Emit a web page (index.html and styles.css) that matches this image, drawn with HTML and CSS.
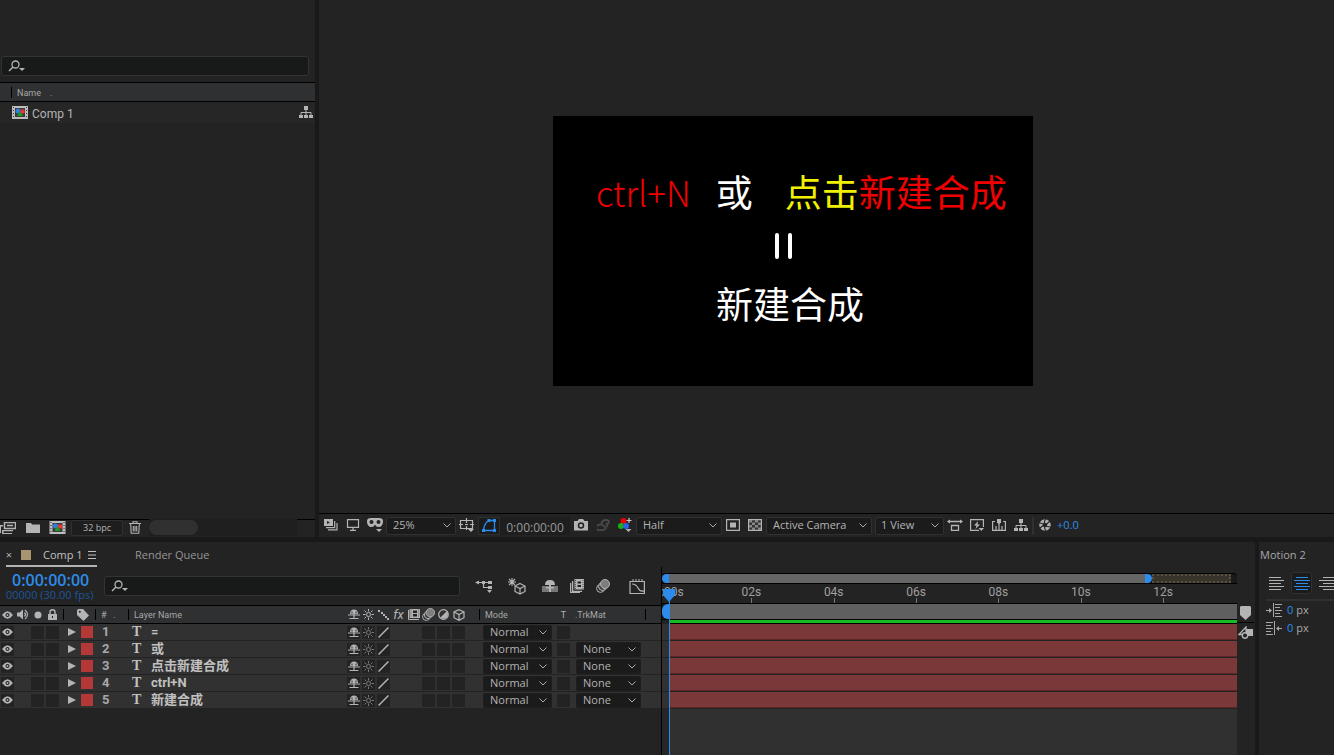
FILE: index.html
```html
<!DOCTYPE html>
<html lang="en">
<head>
	<meta charset="utf-8">
	<title>Comp 1</title>
	<link rel="stylesheet" href="styles.css">
</head>
<body>
	<svg class="sprite">
		<symbol id="i-search" viewBox="0 0 18 12"><circle cx="7.500" cy="4.500" r="3.500" fill="none" stroke="currentColor" stroke-width="1.300"/><path d="M5 7L1 11" stroke="currentColor" stroke-width="1.500"/><path d="M11 8h6l-3 3z" fill="currentColor"/></symbol>
		<symbol id="i-comp" viewBox="0 0 16 13"><path d="M0 0h16v13H0z" fill="#bdbdbd"/><path d="M3 2h10v9H3z" fill="#3a3a3a"/><path d="M1 1.500h1M1 4.500h1M1 7.500h1M1 10.500h1M14 1.500h1M14 4.500h1M14 7.500h1M14 10.500h1" stroke="#333"/><circle cx="6" cy="5" r="2.500" fill="#2d7fe0"/><path d="M8.500 3.500h4v4h-4z" fill="#e33"/><path d="M5 10l3-5 3 5z" fill="#1c9c22"/></symbol>
		<symbol id="i-tree" viewBox="0 0 14 13"><path d="M5 0h4v4H5zM0 9h4v3H0zM5 9h4v3H5zM10 9h4v3h-4z" fill="currentColor"/><path d="M7 4v5M2 9V6.500h10V9" fill="none" stroke="currentColor"/></symbol>
		<symbol id="i-footage" viewBox="0 0 16 12"><path d="M4.500.500h11v6h-11zM7 3.500h6" fill="none" stroke="currentColor" stroke-width="1.500"/><path d="M0 3h3v1.500H1V11H0zM2 8h11v1.300H3.500V11H12v1H2z" fill="currentColor"/></symbol>
		<symbol id="i-folder" viewBox="0 0 14 10"><path d="M0 0h5l1 1.500h8V10H0z" fill="currentColor"/></symbol>
		<symbol id="i-trash" viewBox="0 0 12 13"><path d="M0 2.500h12M4 2V.700h4V2M1.700 3l.5 9.300h7.600l.5-9.300M4.300 5v5.500M6 5v5.500M7.700 5v5.500" fill="none" stroke="currentColor" stroke-width="1.100"/></symbol>
		<symbol id="i-preview" viewBox="0 0 14 12"><path d="M0 0h9v7H0z" fill="currentColor"/><path d="M3 2l3 1.500L3 5z" fill="#222"/><path d="M2 8.700h8.700V2M4 10.900h9V4" fill="none" stroke="currentColor" stroke-width="1.200"/></symbol>
		<symbol id="i-monitor" viewBox="0 0 14 12"><path d="M1.500.600h11v7.800h-11zM7 8.500V11M4 11.300h6" fill="none" stroke="currentColor" stroke-width="1.200"/></symbol>
		<symbol id="i-mask" viewBox="0 0 16 14"><path d="M0 3Q0 0 4 0h8q4 0 4 3c0 4-2 6-4.500 6Q9 9 8 6.500 7 9 4.500 9C2 9 0 7 0 3z" fill="currentColor"/><circle cx="4.500" cy="4" r="2" fill="#222"/><circle cx="11.500" cy="4" r="2" fill="#222"/><path d="M9 11h6l-3 3z" fill="currentColor"/></symbol>
		<symbol id="i-region" viewBox="0 0 16 14"><path d="M1.500 2.500h12v8h-12zM7.500 0v5M7.500 8v4M0 6.500h4M11 6.500h4M6 6.500h3" fill="none" stroke="currentColor" stroke-width="1.200"/><path d="M9 11h6l-3 3z" fill="currentColor"/></symbol>
		<symbol id="i-shape" viewBox="0 0 14 13"><path d="M1.500 11.500C2 6 4 3 7 1.500h5.500v10z" fill="none" stroke="currentColor" stroke-width="1.300"/><path d="M5.500 0h3v3h-3zM11 0h3v3h-3zM0 10h3v3H0zM11 10h3v3h-3z" fill="currentColor"/></symbol>
		<symbol id="i-camera" viewBox="0 0 14 12"><path d="M0 2h3.500L5 0h4l1.500 2H14v9.500H0z" fill="currentColor"/><circle cx="7" cy="6.500" r="2.500" fill="none" stroke="#222" stroke-width="1.500"/></symbol>
		<symbol id="i-person" viewBox="0 0 14 12"><path d="M5 5.500Q6 1 10 1q3 0 3 2t-3 2q2 1 1 3M1 7q3-3 7 0t-1 4-6-1" fill="none" stroke="#484848" stroke-width="1.800"/></symbol>
		<symbol id="i-rgb" viewBox="0 0 14 14"><circle cx="5.500" cy="3" r="3" fill="#f00000"/><circle cx="3" cy="8" r="3" fill="#12b412"/><circle cx="8" cy="8" r="3" fill="#2c62e4"/><path d="M11 0v5M8.500 2.500h5" stroke="#ccc" stroke-width="1.200"/><path d="M7.500 11h6l-3 3z" fill="currentColor"/></symbol>
		<symbol id="i-toggle" viewBox="0 0 14 12"><path d="M.600.600h12.800v10.800H.600z" fill="none" stroke="currentColor" stroke-width="1.200"/><path d="M4 3.500h6v5H4z" fill="currentColor"/></symbol>
		<symbol id="i-checker" viewBox="0 0 14 12"><path d="M.600.600h12.800v10.800H.600z" fill="#333" stroke="currentColor" stroke-width="1.200"/><path d="M1 1h3v2.500H1zM7 1h3v2.500H7zM4 3.500h3V6H4zM10 3.500h3V6h-3zM1 6h3v2.500H1zM7 6h3v2.500H7zM4 8.500h3V11H4zM10 8.500h3V11h-3z" fill="#888"/></symbol>
		<symbol id="i-aspect" viewBox="0 0 16 12"><path d="M1 2.500h14M4.500 6.500h7v5h-7z" fill="none" stroke="currentColor" stroke-width="1.300"/><path d="M0 2.500L3 .500v4zM16 2.500L13 .500v4z" fill="currentColor"/></symbol>
		<symbol id="i-fast" viewBox="0 0 14 13"><path d="M9 11.400H.600V.600h12.800V8" fill="none" stroke="currentColor" stroke-width="1.200"/><path d="M8 2L4 6.500h2.500L5.500 10 10 5.500H7.500zM8.500 9H14l-2.700 3z" fill="currentColor"/></symbol>
		<symbol id="i-timeline" viewBox="0 0 14 12"><path d="M3 2.500H.600v8.800h12.800V2.500H11M4 11V7M7 11V5M10 11V7" fill="none" stroke="currentColor" stroke-width="1.200"/><path d="M5 0h4v3.500L7 5.500l-2-2z" fill="currentColor"/></symbol>
		<symbol id="i-aperture" viewBox="0 0 12 12"><circle cx="6" cy="6" r="4" fill="none" stroke="currentColor" stroke-width="3.500"/><path d="M5 4L6.500 0M7.800 5L11 2M7.500 7.500L12 8M5.500 8l1 4M4 6.500L0 10M4 5L0 3.500" stroke="#222" stroke-width="1.100"/></symbol>
		<symbol id="i-flow" viewBox="0 0 18 13"><path d="M2 2.500h14M8.500 2.500v5H15" fill="none" stroke="currentColor" stroke-width="1.200"/><path d="M0 2.500L4 .500v4zM7 1h3v3H7zM13 1h4v3h-4zM13 6h4v3h-4zM12 10h5l-2.500 3z" fill="currentColor"/></symbol>
		<symbol id="i-draft" viewBox="0 0 18 17"><path d="M4 0v8M0 4h8M1 1l6 6M7 1L1 7" stroke="currentColor" stroke-width="1.100"/><path d="M12 5.500l5 2.500v5.500L12 16l-5-2.500V8zM7 8l5 2.500L17 8M12 10.500V16" fill="none" stroke="currentColor" stroke-width="1.200"/></symbol>
		<symbol id="i-shyall" viewBox="0 0 16 14"><path d="M0 7h16v6H0z" fill="#777"/><path d="M3 6Q3 1 8 1t5 5zM7 5h2v8H7zM4 8h8v1.500H4z" fill="currentColor"/></symbol>
		<symbol id="i-frames" viewBox="0 0 14 14"><path d="M4.500 0H14v10.500H4.500z" fill="currentColor"/><path d="M2.600 2v10.300H12M.600 4v9.400H10" fill="none" stroke="currentColor" stroke-width="1.300"/><path d="M7.500 2.500h3.500V4.500H7.500zM7.500 6h3.500v2H7.500z" fill="#222"/><path d="M5.500 1v9M13 1v9" stroke="#555" stroke-dasharray="1 1"/></symbol>
		<symbol id="i-blur" viewBox="0 0 14 14"><circle cx="4.500" cy="9.500" r="3.900" fill="none" stroke="currentColor"/><circle cx="6.500" cy="7.500" r="4" fill="#444" stroke="currentColor"/><circle cx="9" cy="5" r="4.500" fill="#7d7d7d" stroke="currentColor"/></symbol>
		<symbol id="i-graph" viewBox="0 0 16 15"><path d="M1 2.500h14.400v12H1zM3 5q4 0 6 4t6 3" fill="none" stroke="currentColor" stroke-width="1.200"/><path d="M4 0v2M7 0v2M10 0v2M13 0v2" stroke="currentColor"/></symbol>
		<symbol id="i-eye" viewBox="0 0 12 8"><path d="M0 4q6-8 12 0-6 8-12 0z" fill="currentColor"/><circle cx="6" cy="4" r="2.200" fill="#222"/><circle cx="6" cy="4" r="1" fill="currentColor"/></symbol>
		<symbol id="i-speaker" viewBox="0 0 12 11"><path d="M0 3.500h2.500L6 .500v10L2.500 7.500H0z" fill="currentColor"/><path d="M7.500 3.500q2 2 0 4M8 1q5 4.500 0 9" fill="none" stroke="currentColor" stroke-width="1.200"/></symbol>
		<symbol id="i-dot" viewBox="0 0 8 8"><circle cx="4" cy="4" r="3.500" fill="currentColor"/></symbol>
		<symbol id="i-lock" viewBox="0 0 9 11"><path d="M0 5h9v6H0z" fill="currentColor"/><path d="M2 5.500V3q0-2.300 2.500-2.300T7 3v2.500" fill="none" stroke="currentColor" stroke-width="1.400"/><path d="M4 7h1v2H4z" fill="#222"/></symbol>
		<symbol id="i-tag" viewBox="0 0 12 12"><path d="M0 1.500L1 0h5l6 6.500L6.500 12 0 6z" fill="currentColor"/><circle cx="2.800" cy="2.800" r="1" fill="#222"/></symbol>
		<symbol id="i-shy" viewBox="0 0 12 11"><path d="M2 5Q2 .500 6 .500T10 5z" fill="currentColor"/><path d="M6 3v7M0 6h12M1.500 9.500h9" stroke="currentColor" stroke-width="1.200"/><path d="M4 2.500v2M8 2.500v2" stroke="#333"/></symbol>
		<symbol id="i-sun" viewBox="0 0 11 11"><circle cx="5.500" cy="5.500" r="2" fill="none" stroke="currentColor"/><path d="M5.500 0v2.500M5.500 8.500V11M0 5.500h2.500M8.500 5.500H11M1.500 1.500l1.800 1.800M7.700 7.700l1.800 1.800M9.500 1.500L7.700 3.300M3.300 7.700L1.500 9.500" stroke="currentColor"/></symbol>
		<symbol id="i-dots" viewBox="0 0 11 11"><path d="M0 1h2v2H0zM3 3h2v2H3zM5 5h2v2H5zM7 7h2v2H7zM9 9h2v2H9z" fill="currentColor"/></symbol>
		<symbol id="i-slash" viewBox="0 0 11 11"><path d="M.500 10.500l10-10" stroke="currentColor" stroke-width="1.500"/></symbol>
		<symbol id="i-film" viewBox="0 0 12 11"><path d="M1.500 0H12v9H1.500z" fill="currentColor"/><path d="M.500 1v9.500H11" fill="none" stroke="currentColor"/><path d="M5 1.500h4V4H5zM5 5h4v2.500H5z" fill="#222"/><path d="M3 .500v8M10.700.500v8" stroke="#555" stroke-dasharray="1 1"/></symbol>
		<symbol id="i-adjust" viewBox="0 0 11 11"><circle cx="5.500" cy="5.500" r="4.800" fill="#333" stroke="currentColor" stroke-width="1.200"/><path d="M2 9L9 2Q11 5 9 8T2 9z" fill="currentColor"/></symbol>
		<symbol id="i-cube" viewBox="0 0 12 12"><path d="M6 .700l5 2.300v5.700L6 11.300 1 8.700V3zM1 3l5 2.500L11 3M6 5.500v6" fill="none" stroke="currentColor" stroke-width="1.200"/></symbol>
		<symbol id="i-twirl" viewBox="0 0 8 8"><path d="M0 0l8 4-8 4z" fill="currentColor"/></symbol>
		<symbol id="i-menu" viewBox="0 0 8 8"><path d="M0 .500h8M0 4h8M0 7.500h8" stroke="currentColor"/></symbol>
		<symbol id="i-marker" viewBox="0 0 11 14"><path d="M1 0h9l1 1v8l-5.500 5L0 9V1z" fill="currentColor"/></symbol>
		<symbol id="i-bin" viewBox="0 0 15 14"><path d="M1 8.500L8 1v7.500z" fill="none" stroke="currentColor" stroke-width="1.300"/><path d="M8 3h7v7H8z" fill="currentColor"/><circle cx="7" cy="9.500" r="2.700" fill="#232323" stroke="currentColor" stroke-width="1.400"/></symbol>
		<symbol id="i-left" viewBox="0 0 16 14"><path d="M0 1.500h12M0 4.500h15M0 7.500h12M0 10.500h15M0 13.500h12" stroke="currentColor"/></symbol>
		<symbol id="i-center" viewBox="0 0 16 14"><path d="M2 1.500h12M0 4.500h16M2 7.500h12M0 10.500h16M2 13.500h12" stroke="currentColor"/></symbol>
		<symbol id="i-right" viewBox="0 0 16 14"><path d="M4 1.500h12M0 4.500h16M4 7.500h12M0 10.500h16M4 13.500h12" stroke="currentColor"/></symbol>
		<symbol id="i-inleft" viewBox="0 0 16 14"><path d="M0 7.500h5M7.500 0v14M9 1.500h7M9 4.500h5M9 7.500h7M9 10.500h5M9 13.500h7" stroke="currentColor"/><path d="M3 5L6 7.500 3 10z" fill="currentColor"/></symbol>
		<symbol id="i-inright" viewBox="0 0 16 14"><path d="M11 7.500h5M8.500 0v14M0 1.500h7M0 4.500h5M0 7.500h7M0 10.500h5M0 13.500h7" stroke="currentColor"/><path d="M13 5L10 7.500l3 2.500z" fill="currentColor"/></symbol>
	</svg>

	<div class="workspace">
		<div class="upper">
			<section class="project">
				<label class="search project-search">
					<svg width="18" height="12"><use href="#i-search"/></svg>
					<input type="text" aria-label="Search project">
				</label>
				<div class="project-head">Name<span>.</span></div>
				<div class="project-item">
					<svg width="16" height="13"><use href="#i-comp"/></svg>
					<span>Comp 1</span>
					<svg class="item-tree" width="14" height="13"><use href="#i-tree"/></svg>
				</div>
				<div class="project-foot">
					<button aria-label="Interpret footage"><svg width="16" height="12"><use href="#i-footage"/></svg></button>
					<button aria-label="New folder"><svg width="14" height="10"><use href="#i-folder"/></svg></button>
					<button aria-label="New composition"><svg width="17" height="13"><use href="#i-comp"/></svg></button>
					<button class="depth">32 bpc</button>
					<button aria-label="Delete"><svg width="12" height="13"><use href="#i-trash"/></svg></button>
					<div class="scroll"><div class="thumb"></div></div>
				</div>
			</section>

			<section class="viewer">
				<div class="stage">
					<div class="comp">
						<div class="shot first"><span class="red latin">ctrl+N</span><span class="or">或</span><span class="yellow">点击</span><span class="red">新建合成</span></div>
						<div class="equals"><i></i><i></i></div>
						<div class="shot second">新建合成</div>
					</div>
				</div>
				<div class="viewer-bar">
					<button aria-label="Always preview"><svg width="14" height="12"><use href="#i-preview"/></svg></button>
					<button aria-label="Primary viewer"><svg width="14" height="12"><use href="#i-monitor"/></svg></button>
					<button aria-label="VR"><svg width="16" height="14"><use href="#i-mask"/></svg></button>
					<select class="zoom" aria-label="Magnification"><option>25%</option></select>
					<button aria-label="Grid and guides"><svg width="16" height="14"><use href="#i-region"/></svg></button>
					<button class="on" aria-label="Mask visibility"><svg width="14" height="13"><use href="#i-shape"/></svg></button>
					<button class="time">0:00:00:00</button>
					<button aria-label="Snapshot"><svg width="14" height="12"><use href="#i-camera"/></svg></button>
					<button aria-label="Show snapshot"><svg width="14" height="12"><use href="#i-person"/></svg></button>
					<button aria-label="Channels"><svg width="14" height="14"><use href="#i-rgb"/></svg></button>
					<select class="res" aria-label="Resolution"><option>Half</option></select>
					<button aria-label="Region of interest"><svg width="14" height="12"><use href="#i-toggle"/></svg></button>
					<button aria-label="Transparency grid"><svg width="14" height="12"><use href="#i-checker"/></svg></button>
					<select class="cam" aria-label="3D view"><option>Active Camera</option></select>
					<select class="views" aria-label="View layout"><option>1 View</option></select>
					<button aria-label="Pixel aspect"><svg width="16" height="12"><use href="#i-aspect"/></svg></button>
					<button aria-label="Fast previews"><svg width="14" height="13"><use href="#i-fast"/></svg></button>
					<button aria-label="Timeline"><svg width="14" height="12"><use href="#i-timeline"/></svg></button>
					<button aria-label="Flowchart"><svg width="14" height="13"><use href="#i-tree"/></svg></button>
					<span class="bar-line"></span>
					<button aria-label="Reset exposure"><svg width="12" height="12"><use href="#i-aperture"/></svg></button>
					<span class="exposure">+0.0</span>
				</div>
			</section>
		</div>

		<div class="lower">
			<section class="timeline">
				<div class="tabs">
					<div class="tab active">
						<button class="close" aria-label="Close">×</button>
						<span class="swatch"></span>
						<span>Comp 1</span>
						<svg width="8" height="8"><use href="#i-menu"/></svg>
					</div>
					<div class="tab">Render Queue</div>
				</div>
				<div class="timeline-body">
					<div class="layers">
						<div class="tools">
							<div class="clock"><b>0:00:00:00</b><span>00000 (30.00 fps)</span></div>
							<label class="search layer-search">
								<svg width="18" height="12"><use href="#i-search"/></svg>
								<input type="text" aria-label="Search layers">
							</label>
							<button class="wide" aria-label="Mini-flowchart"><svg width="18" height="13"><use href="#i-flow"/></svg></button>
							<button class="wide" aria-label="Draft 3D"><svg width="18" height="17"><use href="#i-draft"/></svg></button>
							<button class="wide" aria-label="Hide shy layers"><svg width="16" height="14"><use href="#i-shyall"/></svg></button>
							<button aria-label="Frame blending"><svg width="14" height="14"><use href="#i-frames"/></svg></button>
							<button class="blur" aria-label="Motion blur"><svg width="14" height="14"><use href="#i-blur"/></svg></button>
							<button class="graph" aria-label="Graph editor"><svg width="16" height="15"><use href="#i-graph"/></svg></button>
						</div>
						<table>
							<colgroup>
								<col span="4" class="c-sw"><col class="c-label"><col class="c-num"><col class="c-name">
								<col span="8" class="c-sw"><col class="c-mode"><col class="c-sw"><col class="c-matte">
							</colgroup>
							<thead>
								<tr>
									<th><svg width="11" height="8"><use href="#i-eye"/></svg></th>
									<th><svg width="12" height="11"><use href="#i-speaker"/></svg></th>
									<th><svg width="8" height="8"><use href="#i-dot"/></svg></th>
									<th><svg width="9" height="11"><use href="#i-lock"/></svg></th>
									<th class="line tag"><svg width="12" height="12"><use href="#i-tag"/></svg></th>
									<th class="line txt">#&nbsp; &nbsp;.</th>
									<th class="line txt">Layer Name</th>
									<th><svg width="12" height="11"><use href="#i-shy"/></svg></th>
									<th><svg width="11" height="11"><use href="#i-sun"/></svg></th>
									<th><svg width="11" height="11"><use href="#i-dots"/></svg></th>
									<th class="fx">fx</th>
									<th><svg width="12" height="11"><use href="#i-film"/></svg></th>
									<th><svg width="13" height="13"><use href="#i-blur"/></svg></th>
									<th><svg width="11" height="11"><use href="#i-adjust"/></svg></th>
									<th><svg width="12" height="12"><use href="#i-cube"/></svg></th>
									<th class="line txt mode-head">Mode</th>
									<th>T</th>
									<th class="line txt matte-head">.TrkMat</th>
								</tr>
							</thead>
							<tbody id="rows"></tbody>
						</table>
					</div>
					<div class="tracks">
						<div class="navigator"><i class="grip start"></i><i class="span"></i><i class="grip end"></i><i class="rest"></i></div>
						<div class="ruler">
							<div><span>0:00s</span></div><div><span>02s</span></div><div><span>04s</span></div><div><span>06s</span></div><div><span>08s</span></div><div><span>10s</span></div><div><span>12s</span></div>
						</div>
						<div class="work"><i class="grip start"></i><i class="span"></i></div>
						<div class="cached"></div>
						<div id="bars"></div>
						<div class="playhead"><svg width="12" height="13"><path d="M0 0h12v6l-6 7-6-7z" fill="#2d8ceb"/></svg></div>
					</div>
					<div class="side">
						<button aria-label="Comp marker"><svg width="11" height="14"><use href="#i-marker"/></svg></button>
						<button aria-label="Comp button"><svg width="15" height="14"><use href="#i-bin"/></svg></button>
					</div>
				</div>
			</section>

			<section class="motion">
				<h2>Motion 2</h2>
				<div class="align">
					<button aria-label="Left"><svg width="16" height="14"><use href="#i-left"/></svg></button>
					<button class="on" aria-label="Center"><svg width="16" height="14"><use href="#i-center"/></svg></button>
					<button aria-label="Right"><svg width="16" height="14"><use href="#i-right"/></svg></button>
				</div>
				<div class="indent"><svg width="16" height="14"><use href="#i-inleft"/></svg><span><b>0</b> px</span></div>
				<div class="indent"><svg width="16" height="14"><use href="#i-inright"/></svg><span><b>0</b> px</span></div>
			</section>
		</div>
	</div>
	<script src="script.js"></script>
</body>
</html>
```

FILE: styles.css
```css
* {
	box-sizing: border-box;
}
body {
	margin: 0;
	background-color: #191919;
	color: #a8a8a8;
	font-family: "Open Sans", "Noto Sans CJK SC", sans-serif;
	font-size: 11px;
	line-height: 14px;
}
.sprite {
	display: none;
}
svg {
	display: block;
	flex: none;
}
button, input, select {
	font: inherit;
	color: inherit;
	background: none;
	border: 0;
	border-radius: 0;
	padding: 0;
	margin: 0;
	outline: none;
}
button {
	display: flex;
	align-items: center;
	justify-content: center;
	flex: none;
	width: 22px;
	height: 18px;
	color: #b4b4b4;
}
select {
	appearance: none;
	height: 18px;
	padding: 0 0 2px 6px;
	border: 1px solid #303030;
	border-radius: 2px;
	color: #b4b4b4;
	background: #1b1b1b url("data:image/svg+xml,%3Csvg xmlns='http://www.w3.org/2000/svg' width='8' height='5'%3E%3Cpath d='M.5.5L4 4 7.500.5' fill='none' stroke='%23a8a8a8'/%3E%3C/svg%3E") no-repeat right 4px center;
}
.workspace {
	display: grid;
	grid-template-rows: minmax(0, 1fr) 213px;
	gap: 5px;
	height: 100vh;
	overflow: hidden;
}
.upper {
	display: grid;
	grid-template-columns: 315px minmax(0, 1fr);
	gap: 4px;
}
.lower {
	display: grid;
	grid-template-columns: minmax(0, 1fr) 75px;
	gap: 4px;
}
.project, .viewer, .timeline, .motion {
	display: flex;
	flex-direction: column;
	min-width: 0;
	overflow: hidden;
	background-color: #232323;
}

/* project panel */
.search {
	display: flex;
	align-items: center;
	height: 20px;
	padding-left: 6px;
	border: 1px solid #333;
	border-radius: 3px;
	background-color: #181a19;
	color: #b4b4b4;
}
.search input {
	flex: 1;
	min-width: 0;
}
.project-search {
	margin: 56px 6px 6px 1px;
}
.project-head {
	height: 20px;
	border-top: 1px solid #000;
	border-bottom: 1px solid #000;
	padding-left: 17px;
	background: linear-gradient(#000, #000) 11px 4px / 1px 11px no-repeat #2f3031;
	font-family: Roboto, sans-serif;
	font-size: 9px;
	line-height: 20px;
}
.project-head span {
	margin-left: 9px;
}
.project-item {
	display: flex;
	align-items: center;
	gap: 4px;
	height: 21px;
	padding: 0 2px 0 12px;
	background-color: #262626;
	color: #b4b4b4;
	font-family: Roboto, sans-serif;
	font-size: 12px;
}
.project-item span {
	padding-top: 2px;
}
.item-tree {
	margin-left: auto;
}
.project-foot {
	display: flex;
	align-items: center;
	margin-top: auto;
	height: 18px;
	padding-bottom: 2px;
	border-top: 1px solid #000;
}
.project-foot button {
	width: 25px;
	height: 16px;
}
.project-foot button:first-child {
	width: 20px;
	padding-right: 4px;
}
.project-foot .depth {
	width: 52px;
	margin: 0 1px;
	border: 1px solid #303030;
	border-radius: 2px;
	background-color: #1e1e1e;
	font-size: 9px;
}
.project-foot .depth + button {
	width: 22px;
	margin-right: 3px;
}
.scroll {
	width: 148px;
	height: 17px;
	background-color: #1f1f1f;
}
.thumb {
	width: 49px;
	height: 15px;
	margin-top: 1px;
	border-radius: 8px;
	background-color: #303030;
}

/* composition viewer */
.stage {
	flex: 1;
	display: flex;
	align-items: center;
	justify-content: center;
	padding: 0 67px 11px 0;
}
.comp {
	position: relative;
	width: 480px;
	height: 270px;
	background-color: #000;
	color: #fff;
	font-family: "Noto Sans CJK SC", sans-serif;
	font-weight: 400;
	font-size: 37px;
	line-height: 44px;
}
.shot {
	position: absolute;
	white-space: nowrap;
}
.first {
	left: 43px;
	top: 53px;
}
.second {
	left: 163px;
	top: 165px;
}
.latin {
	font-size: 35px;
	font-weight: 300;
}
.or {
	margin: 0 32px 0 25px;
}
.red {
	color: #f00000;
}
.yellow {
	color: #f0f000;
}
.equals {
	position: absolute;
	left: 222px;
	top: 117px;
	display: flex;
	gap: 9px;
}
.equals i {
	width: 4px;
	height: 26px;
	border-radius: 2px;
	background-color: #fff;
}
.viewer-bar {
	display: flex;
	align-items: center;
	height: 24px;
	padding-left: 1px;
	border-top: 1px solid #000;
}
.viewer-bar button {
	padding-bottom: 1px;
}
.viewer-bar .on {
	border: 1px solid #303030;
	background-color: #1b1b1b;
}
.on {
	color: #2d8ceb;
}
.zoom {
	width: 70px;
}
.res {
	width: 86px;
}
.cam {
	width: 106px;
	margin-right: 3px;
}
.views {
	width: 69px;
	padding-left: 5px;
}
.viewer-bar .time {
	width: 70px;
	padding: 5px 0 0;
	background-color: #1e1e1e;
	color: #999;
	font-size: 12px;
}
.bar-line {
	width: 2px;
	height: 18px;
	background-color: #303030;
}
.exposure {
	padding: 0 0 2px 1px;
	color: #2d8ceb;
}

/* timeline */
.tabs {
	display: flex;
	height: 25px;
	padding-left: 6px;
}
.tab {
	display: flex;
	align-items: center;
	color: #969696;
}
.active {
	width: 91px;
	margin-right: 38px;
	padding-top: 2px;
	border-bottom: 2px solid #b4b4b4;
	color: #c0c0c0;
}
.active svg {
	margin-left: auto;
	margin-right: 1px;
}
.close {
	width: 6px;
	margin-right: 9px;
}
.swatch {
	width: 10px;
	height: 10px;
	margin-right: 12px;
	background-color: #a8956f;
}
.timeline-body {
	display: flex;
	flex: 1;
}
.layers {
	width: 662px;
	border-right: 1px solid #000;
}
.tools {
	display: flex;
	align-items: center;
	height: 38px;
}
.clock {
	display: flex;
	flex-direction: column;
	width: 104px;
	padding: 1px 0 0 6px;
	color: #1d5596;
	line-height: 13px;
}
.clock b {
	padding-left: 6px;
	color: #2d8ceb;
	font-size: 16px;
	font-weight: 600;
	line-height: 16px;
}
.layer-search {
	width: 356px;
	margin-right: 7px;
}
.tools .wide {
	width: 33px;
}
.blur {
	margin: 0 12px 0 4px;
}
table {
	width: 100%;
	table-layout: fixed;
	border-collapse: separate;
	border-spacing: 0;
}
th, td {
	height: 17px;
	padding: 0;
	border-bottom: 1px solid #232323;
	background-color: #313131;
	text-align: left;
	white-space: nowrap;
}
th {
	height: 19px;
	border-top: 1px solid #000;
	border-bottom: 1px solid #000;
	background-color: #2f3031;
	color: #b4b4b4;
	font-family: Roboto, sans-serif;
	font-size: 9px;
	font-weight: 400;
	text-align: center;
}
th svg {
	margin: 0 auto;
}
.c-sw {
	width: 15px;
}
.c-label {
	width: 35px;
}
.c-num {
	width: 33px;
}
.c-name {
	width: 218px;
}
.c-mode {
	width: 90px;
}
.line {
	background: linear-gradient(#000, #000) 3px 3px / 1px 11px no-repeat #2f3031;
}
.line.txt {
	background-position: 0 3px;
}
.txt {
	padding-left: 6px;
	color: #a8a8a8;
	text-align: left;
}
.tag svg {
	margin-left: 17px;
}
.line.mode-head {
	padding-left: 19px;
	background-position: 13px 3px;
}
.line.matte-head {
	padding-left: 4px;
	background-position: 74px 3px;
}
.fx {
	font-size: 13px;
	font-style: italic;
}
td button {
	width: 13px;
	height: 13px;
	margin: 0 auto;
	background-color: #232323;
}
td .sun {
	color: #777;
}
.label {
	display: flex;
	align-items: center;
	gap: 5px;
	padding-left: 8px;
	color: #b4b4b4;
}
.label i {
	width: 12px;
	height: 12px;
	background-color: #b53838;
}
.num {
	padding-left: 7px;
	font-family: Roboto, sans-serif;
	font-size: 13px;
	font-weight: 700;
}
.name {
	display: flex;
	align-items: center;
	gap: 9px;
	padding-left: 4px;
	color: #c0c0c0;
	font-family: Roboto, "Noto Sans CJK SC", sans-serif;
	font-size: 13px;
	font-weight: 700;
}
.name b {
	width: 10px;
	font-family: "Liberation Serif", serif;
	font-size: 14px;
}
td select {
	display: block;
	height: 15px;
	border-color: #1e1e1e;
	line-height: 12px;
}
.mode {
	width: 69px;
	margin-left: 17px;
}
.matte {
	width: 65px;
	margin-left: 5px;
}

/* tracks */
.tracks {
	position: relative;
	flex: 1;
	min-width: 0;
	padding-top: 6px;
	overflow: hidden;
	background: linear-gradient(#232323, #232323) 0 0 / 100% 56px no-repeat, linear-gradient(#262626, #262626) 0 0 / 7px 100% no-repeat #303030;
}
.navigator {
	display: flex;
	height: 11px;
	border-top: 1px solid #000;
	border-bottom: 1px solid #000;
	border-radius: 4px 4px 0 0;
	background-color: #191919;
}
.span {
	flex: 1;
	background-color: #666;
}
.grip {
	width: 7px;
	background-color: #2d8ceb;
}
.start {
	border-radius: 6px 0 0 6px;
}
.end {
	border-radius: 0 6px 6px 0;
}
.rest {
	width: 79px;
	margin-right: 6px;
	border: 2px dotted #5a503e;
	background-color: #38342b;
}
.ruler {
	display: flex;
	height: 19px;
	padding-left: 7px;
	color: #a0a0a0;
	font-family: Roboto, sans-serif;
	font-size: 12px;
	line-height: 17px;
}
.ruler div {
	flex: 0 0 14.5%;
	background: linear-gradient(#777, #777) 0 100% / 1px 5px no-repeat;
}
.ruler span {
	display: flex;
	justify-content: center;
	width: 0;
}
.work {
	display: flex;
	height: 17px;
	border-top: 1px solid #000;
	border-bottom: 1px solid #000;
	background-color: #191919;
}
.work .span {
	background-color: #5f5f5f;
}
.cached {
	height: 4px;
	margin-left: 7px;
	border-bottom: 1px solid #000;
	background-color: #16bd22;
}
#bars {
	background-color: #313131;
}
.bar {
	height: 17px;
	padding-left: 7px;
	border-bottom: 1px solid #232323;
	background: linear-gradient(#7a3838 15px, #5c2626 15px) content-box;
}
.playhead {
	position: absolute;
	left: 1px;
	top: 22px;
	bottom: 0;
	width: 12px;
	background: linear-gradient(#2d8ceb, #2d8ceb) 6px 0 / 1px 100% no-repeat;
}
.side {
	width: 18px;
	padding-top: 36px;
}
.side button {
	width: 17px;
	height: 20px;
	border-bottom: 1px solid #000;
}
.side button + button {
	border: 0;
}

/* motion panel */
.motion h2 {
	margin: 6px 1px 10px;
	font-size: 11px;
	font-weight: 400;
	line-height: 14px;
}
.align {
	display: flex;
	gap: 4px;
	margin-left: 7px;
	padding-bottom: 5px;
	border-bottom: 2px solid #303030;
}
.align button {
	width: 21px;
	height: 22px;
	border: 1px solid transparent;
	border-radius: 3px;
}
.align .on {
	color: #2d8ceb;
	border-color: #303030;
	background-color: #1b1b1b;
}
.indent {
	display: flex;
	align-items: center;
	gap: 5px;
	height: 18px;
	padding-left: 7px;
}
.indent b {
	color: #2d8ceb;
	font-weight: 400;
}
```

FILE: script.js
```js
var layers = ['=', '或', '点击新建合成', 'ctrl+N', '新建合成'];

function icon(name, w, h) {
	return '<svg width="' + w + '" height="' + h + '"><use href="#i-' + name + '"/></svg>';
}

function toggle(content, cls) {
	return '<td><button class="' + (cls || '') + '">' + (content || '') + '</button></td>';
}

var rows = '';
var bars = '';
for (var i = 0; i < layers.length; i++) {
	rows += '<tr>' + toggle(icon('eye', 11, 8)) + '<td></td>' + toggle() + toggle();
	rows += '<td><div class="label">' + icon('twirl', 8, 8) + '<i></i></div></td>';
	rows += '<td class="num">' + (i + 1) + '</td>';
	rows += '<td><div class="name"><b>T</b><span>' + layers[i] + '</span></div></td>';
	rows += toggle(icon('shy', 12, 11)) + toggle(icon('sun', 11, 11), 'sun') + toggle(icon('slash', 11, 11));
	rows += '<td></td><td></td>' + toggle() + toggle() + toggle();
	rows += '<td><select class="mode" aria-label="Mode"><option>Normal</option></select></td>' + toggle() + '<td>';
	// the top layer has nothing above it to use as a matte
	if (i > 0)
		rows += '<select class="matte" aria-label="Track matte"><option>None</option></select>';
	rows += '</td></tr>';
	bars += '<div class="bar"></div>';
}
document.querySelector('#rows').innerHTML = rows;
document.querySelector('#bars').innerHTML = bars;
```
